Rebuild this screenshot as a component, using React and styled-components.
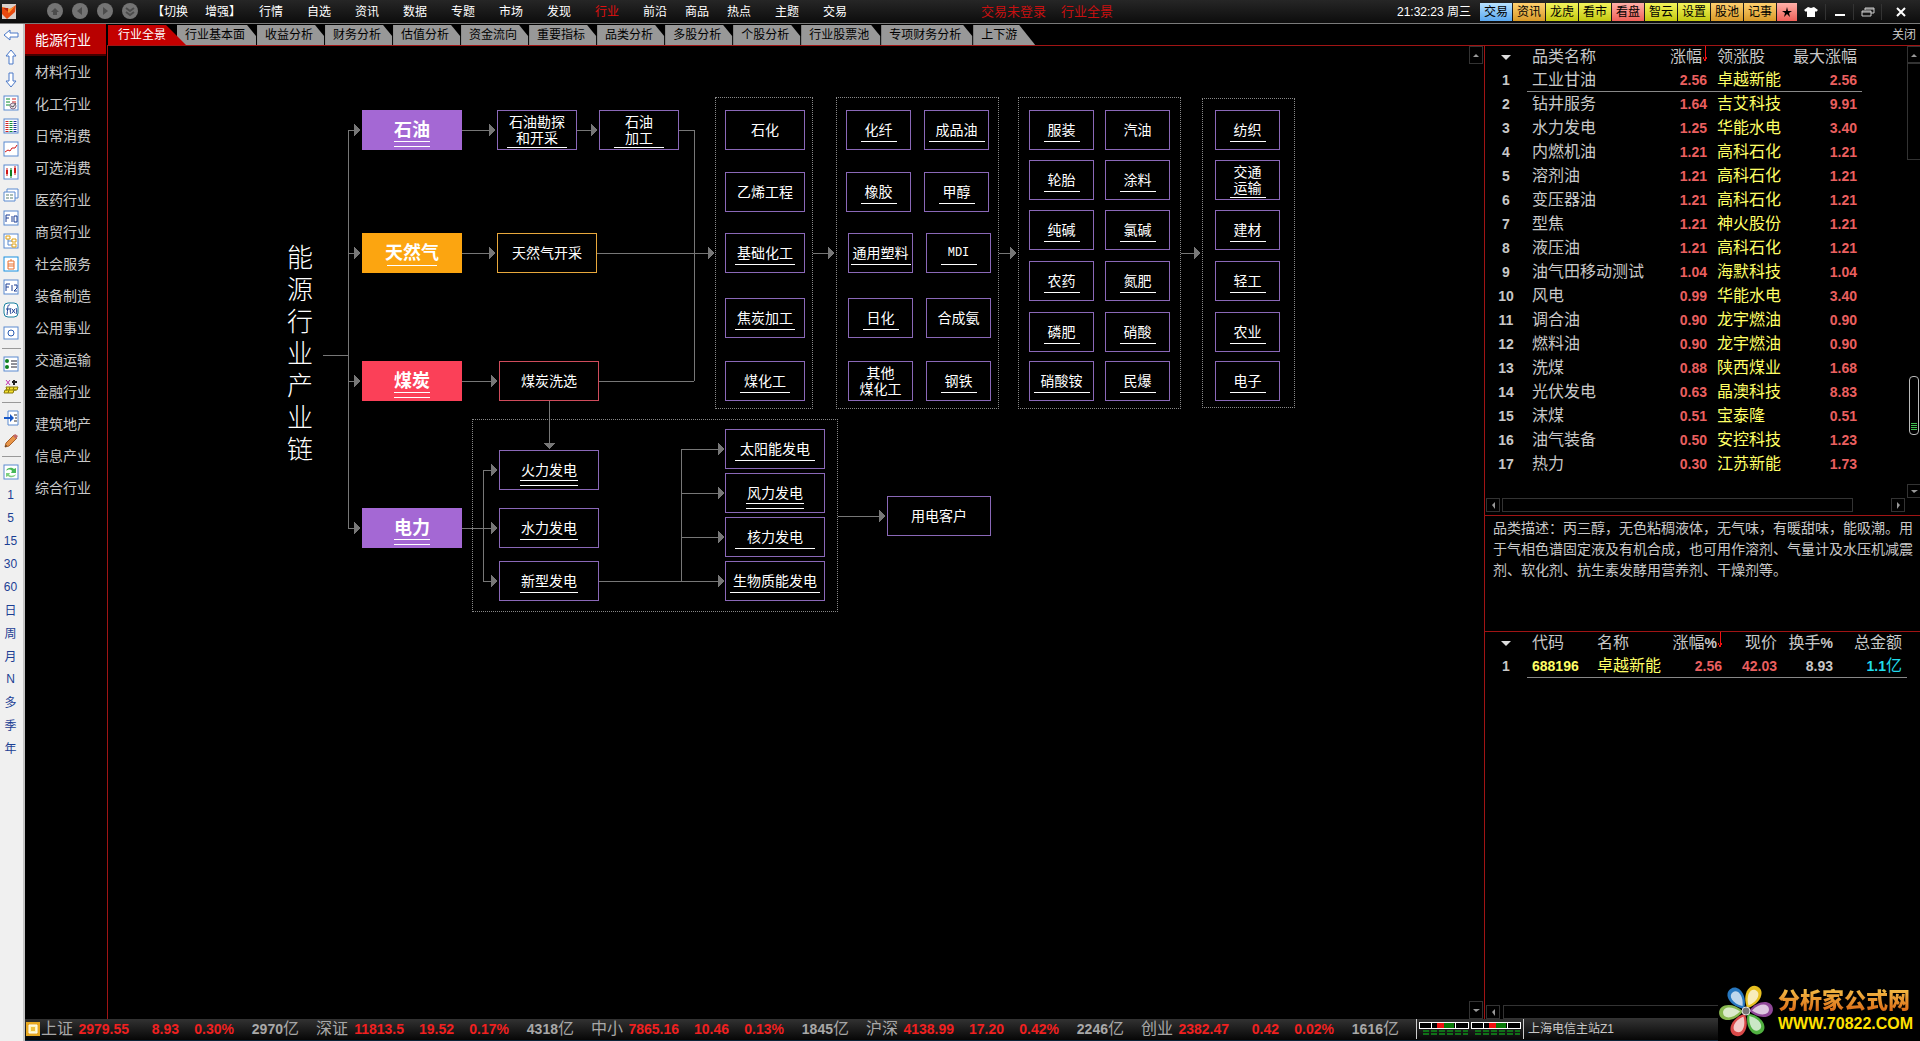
import React, { useState } from 'react';
import styled, { createGlobalStyle, css } from 'styled-components';

const RED_LINE = '#a01414';
const UP = '#ea5f5f';
const TEXT = '#c8c8c8';

const GlobalStyle = createGlobalStyle`
  * { box-sizing: border-box; }
  body {
    margin: 0;
    background: #000;
    color: ${TEXT};
    font-family: "Liberation Sans", "Noto Sans CJK SC", sans-serif;
    font-weight: 400;
    overflow: hidden;
  }
  button {
    margin: 0;
    padding: 0;
    border: 0;
    background: none;
    color: inherit;
    font: inherit;
    cursor: pointer;
  }
  svg { display: block; }
`;

const Page = styled.div`
  display: flex;
  flex-direction: column;
  height: 100vh;
`;

/* ---------- top bar ---------- */

const TopBar = styled.header`
  display: flex;
  align-items: center;
  height: 24px;
  flex: none;
  background: linear-gradient(#262626, #0c0c0c);
  border-bottom: 1px solid #7a7a7a;
  color: #fff;
  font-size: 12px;
  line-height: 16px;
`;

const Brand = styled.div`
  width: 47px;
  padding-left: 2px;
`;

const RoundButtons = styled.div`
  display: flex;
  gap: 8px;
  width: 105px;
`;

const Menu = styled.nav`
  display: flex;
`;

const MenuItem = styled.button`
  width: ${p => p.$w || 48}px;
  text-align: left;
  white-space: nowrap;
  color: ${p => (p.$active ? '#e01010' : '#fff')};
`;

const Notices = styled.div`
  display: flex;
  flex: 1;
  gap: 15px;
  padding-left: 110px;
  color: #c81010;
  font-size: 13px;
`;

const Clock = styled.time`
  width: 83px;
  white-space: nowrap;
`;

const Shortcuts = styled.div`
  display: flex;
  gap: 1px;
`;

const shades = {
  blue: 'linear-gradient(#b8e2ff, #5aa8f0)',
  orange: 'linear-gradient(#ffd070, #d89a28)',
  yellow: 'linear-gradient(#f4f45c, #c4c810)',
  red: 'linear-gradient(#ffb0a8, #f06058)',
};

const Shortcut = styled.button`
  width: ${p => p.$w || 32}px;
  height: 18px;
  background: ${p => shades[p.$shade]};
  color: #000;
  line-height: 16px;
  text-align: center;
`;

const WindowButtons = styled.div`
  display: flex;
`;

const WindowButton = styled.button`
  display: flex;
  align-items: center;
  justify-content: center;
  width: ${p => p.$w || 28}px;
  height: 16px;
  & + & { border-left: 1px solid #333; }
`;

/* ---------- tool strip ---------- */

const Body = styled.div`
  display: flex;
  flex: 1;
  min-height: 0;
`;

const Strip = styled.aside`
  width: 25px;
  flex: none;
  background: #f0f0f0;
  border-right: 2px solid #c4c4c4;
`;

const StripButton = styled.button`
  display: flex;
  align-items: center;
  justify-content: center;
  width: 21px;
  height: 23px;
  color: #1c3f94;
  font-size: 12px;
  &:first-child { height: 21px; }
`;

const StripRule = styled.hr`
  height: 1px;
  margin: 4px 2px 3px;
  border: 0;
  background: #999;
`;

/* ---------- work area ---------- */

const Work = styled.div`
  display: flex;
  flex-direction: column;
  flex: 1;
  min-width: 0;
`;

const WorkMain = styled.div`
  display: flex;
  flex: 1;
  min-height: 0;
`;

const Sectors = styled.nav`
  width: 82px;
  flex: none;
  padding-right: 1px;
`;

const Sector = styled.button`
  display: block;
  width: 100%;
  height: 32px;
  padding: 0 0 2px 10px;
  text-align: left;
  font-size: 14px;
  color: ${p => (p.$active ? '#fff' : TEXT)};
  background: ${p => (p.$active ? 'linear-gradient(#b80000 94%, #400 94%)' : 'none')};
`;

const Center = styled.div`
  display: flex;
  flex-direction: column;
  flex: 1;
  min-width: 0;
`;

const TabRow = styled.div`
  display: flex;
  align-items: flex-end;
  height: 22px;
  flex: none;
  padding-left: 1px;
  border-bottom: 1px solid ${RED_LINE};
`;

const Tab = styled.button`
  height: 20px;
  padding: 0 12px 0 8px;
  background: #989898;
  color: #000;
  font-size: 12px;
  line-height: 20px;
  white-space: nowrap;
  clip-path: polygon(0 0, calc(100% - 10px) 0, calc(100% - 1px) 11px, calc(100% - 1px) 100%, 0 100%);
  ${p => p.$last && css`
    padding-right: 18px;
    clip-path: polygon(0 0, calc(100% - 16px) 0, 100% 100%, 0 100%);
  `}
  ${p => p.$active && css`
    padding: 0 20px 0 10px;
    margin-right: -9px;
    background: #c40000;
    color: #fff;
    z-index: 1;
    clip-path: polygon(0 0, calc(100% - 20px) 0, 100% 100%, 0 100%);
  `}
`;

const CloseLink = styled.button`
  margin-left: auto;
  padding-right: 4px;
  font-size: 12px;
  line-height: 20px;
`;

const Columns = styled.div`
  display: flex;
  flex: 1;
  min-height: 0;
`;

const Canvas = styled.main`
  position: relative;
  flex: 1;
  min-width: 0;
  overflow: hidden;
  border-left: 1px solid ${RED_LINE};
`;

const Wires = styled.svg`
  position: absolute;
  left: 0;
  top: 0;
  stroke: #777;
  fill: none;
  shape-rendering: crispEdges;
`;

const Cluster = styled.div`
  position: absolute;
  left: ${p => p.$x}px;
  top: ${p => p.$y}px;
  width: ${p => p.$w}px;
  height: ${p => p.$h}px;
  border: 1px dotted #888;
`;

const tones = {
  violet: '#8a68b8',
  amber: '#e8a83c',
  rose: '#d04c5c',
};

const fills = {
  violet: '#a468d4',
  amber: '#fca510',
  rose: '#fb4058',
};

const Node = styled.button`
  position: absolute;
  left: ${p => p.$x}px;
  top: ${p => p.$y}px;
  width: ${p => p.$w}px;
  height: 40px;
  border: 1px solid ${p => tones[p.$tone]};
  color: #fff;
  font-size: 14px;
  line-height: 16px;
  white-space: pre;
  text-align: center;
  ${p => p.$latin && css`
    font-family: "Liberation Mono", monospace;
    font-size: 12px;
  `}
  ${p => p.$solid && css`
    border: 0;
    background: ${fills[p.$tone]};
    font-size: 18px;
    font-weight: 700;
    line-height: 20px;
  `}
  ${p => p.$bar && css`
    &::after {
      content: "";
      position: absolute;
      left: 50%;
      bottom: ${p.$double ? 3 : p.$low ? 0 : 6}px;
      width: ${p.$bar}px;
      height: ${p.$double ? 4 : 1}px;
      margin-left: -${p.$bar / 2}px;
      border-top: 1px solid #fff;
      border-bottom: ${p.$double ? '1px solid #fff' : '0'};
    }
  `}
`;

const ChainTitle = styled.h1`
  position: absolute;
  left: 178px;
  top: 196px;
  width: 28px;
  margin: 0;
  color: #fff;
  font-size: 26px;
  font-weight: 300;
  line-height: 32px;
  text-align: center;
  word-break: break-all;
`;

/* ---------- scroll bars ---------- */

const ScrollColumn = styled.div`
  display: flex;
  flex-direction: column;
  justify-content: space-between;
  flex: none;
  width: ${p => p.$w}px;
`;

const ScrollButton = styled.button`
  display: flex;
  align-items: center;
  justify-content: center;
  flex: none;
  width: 14px;
  height: ${p => p.$h || 14}px;
  border: 1px solid #333;
  color: #999;
`;

const ScrollThumb = styled.div`
  height: 97px;
  margin-bottom: auto;
  border: 1px solid #333;
  border-right: 0;
`;

const ScrollRow = styled.div`
  display: flex;
  gap: 2px;
  padding: 0 15px 3px 1px;
`;

const ScrollTrack = styled.div`
  flex: 1;
  height: 14px;
  margin-right: ${p => p.$gap || 0}px;
  border: 1px solid #333;
`;

/* ---------- quote panel ---------- */

const Panel = styled.aside`
  display: flex;
  flex-direction: column;
  flex: none;
  width: 436px;
  border-left: 1px solid ${RED_LINE};
`;

const ListPane = styled.section`
  position: relative;
  display: flex;
  flex-direction: column;
  height: 470px;
  border-bottom: 1px solid ${RED_LINE};
`;

const ListBody = styled.div`
  display: flex;
  flex: 1;
  justify-content: space-between;
`;

const Gauge = styled.div`
  position: absolute;
  right: 1px;
  top: 330px;
  display: flex;
  align-items: flex-end;
  justify-content: center;
  width: 10px;
  height: 59px;
  padding-bottom: 2px;
  border: 1px solid #bbb;
  border-radius: 4px;
  background: #000;
`;

const Quotes = styled.table`
  table-layout: fixed;
  border-collapse: separate;
  border-spacing: 0;
  align-self: flex-start;
  width: ${p => p.$w}px;
  font-size: 16px;
`;

const Cell = styled.td`
  height: 24px;
  padding: 0 5px;
  border-bottom: 1px solid ${p => (p.$marked ? '#888' : 'transparent')};
  color: ${p => p.$color || TEXT};
  font-size: ${p => (p.$num ? 14 : 16)}px;
  font-weight: ${p => (p.$num ? 700 : 400)};
  line-height: 22px;
  text-align: ${p => p.$align || 'left'};
  white-space: nowrap;
`;

const HeadCell = styled.th`
  height: 22px;
  padding: 0 5px;
  font-weight: 400;
  line-height: 22px;
  text-align: ${p => p.$align || 'left'};
  white-space: nowrap;
  svg { display: inline-block; }
  b { font-size: 14px; }
`;

const HeadSort = styled(HeadCell)`
  padding-right: 4px;
`;

const Unit = styled.span`
  font-size: 16px;
  font-weight: 400;
`;

const About = styled.p`
  height: 116px;
  margin: 0;
  padding: 2px 6px 0 8px;
  border-bottom: 1px solid ${RED_LINE};
  font-size: 14px;
  line-height: 21px;
  word-break: break-all;
`;

const StockPane = styled.section`
  display: flex;
  flex-direction: column;
  flex: 1;
  justify-content: space-between;
`;

const StockScroll = styled.div`
  display: flex;
  gap: 3px;
  padding-left: 1px;
`;

/* ---------- status bar ---------- */

const StatusBar = styled.footer`
  display: flex;
  align-items: center;
  height: 22px;
  flex: none;
  padding-bottom: 1px;
  background: linear-gradient(#323232, #060606);
  border-bottom: 1px solid #0c2438;
  font-size: 16px;
  line-height: 20px;
`;

const StatusIcon = styled.div`
  width: 16px;
  padding-left: 1px;
`;

const IndexQuote = styled.div`
  display: grid;
  grid-template-columns: 34px 54px 50px 55px 65px;
  width: 275px;
  flex: none;
  white-space: nowrap;
  color: #a8a8a8;
`;

const IndexValue = styled.span`
  color: ${p => (p.$plain ? '#a8a8a8' : '#f02020')};
  font-size: 14px;
  font-weight: 700;
  text-align: right;
`;

const Meter = styled.div`
  display: flex;
  width: 108px;
  height: 20px;
  padding: 2px 1px 0;
  border-left: 1px solid #ccc;
  border-right: 1px solid #ccc;
`;

const Server = styled.span`
  padding-left: 4px;
  font-size: 12px;
`;

const Watermark = styled.a`
  position: fixed;
  right: 0;
  bottom: 0;
  display: flex;
  align-items: center;
  width: 202px;
  height: 60px;
  background: #000;
  text-decoration: none;
  font-weight: 700;
`;

const WatermarkText = styled.span`
  padding-left: 4px;
  color: #ffe000;
  font-size: 16px;
  line-height: 20px;
  strong {
    display: block;
    background: linear-gradient(#f4c048, #d86010);
    background-clip: text;
    color: transparent;
    font-size: 22px;
    line-height: 26px;
  }
`;

/* ---------- data ---------- */

const menu = [
  ['【切换', 53], ['增强】', 54], ['行情'], ['自选'], ['资讯'], ['数据'], ['专题'], ['市场'],
  ['发现'], ['行业'], ['前沿', 42], ['商品', 42], ['热点'], ['主题'], ['交易'],
];

const shortcuts = [
  ['交易', 'blue'], ['资讯', 'orange'], ['龙虎', 'yellow'], ['看市', 'yellow'], ['看盘', 'red'],
  ['智云', 'yellow'], ['设置', 'yellow'], ['股池', 'orange'], ['记事', 'orange'],
];

const tabs = [
  '行业全景', '行业基本面', '收益分析', '财务分析', '估值分析', '资金流向', '重要指标',
  '品类分析', '多股分析', '个股分析', '行业股票池', '专项财务分析', '上下游',
];

const sectors = [
  '能源行业', '材料行业', '化工行业', '日常消费', '可选消费', '医药行业', '商贸行业', '社会服务',
  '装备制造', '公用事业', '交通运输', '金融行业', '建筑地产', '信息产业', '综合行业',
];

const periods = ['1', '5', '15', '30', '60', '日', '周', '月', 'N', '多', '季', '年'];

const clusters = [
  [607, 51, 98, 312], [728, 51, 163, 312], [910, 51, 163, 312], [1094, 52, 93, 310], [364, 373, 366, 193],
];

// label, x, y, width, underline width, options
const nodes = [
  ['石油', 254, 64, 100, 36, { solid: true, double: true }],
  ['天然气', 254, 187, 100, 50, { solid: true, tone: 'amber' }],
  ['煤炭', 254, 315, 100, 36, { solid: true, double: true, tone: 'rose' }],
  ['电力', 254, 462, 100, 36, { solid: true, double: true }],
  ['石油勘探\n和开采', 389, 64, 80, 60, { low: true }],
  ['石油\n加工', 491, 64, 80, 50, { low: true }],
  ['天然气开采', 389, 187, 100, 0, { tone: 'amber' }],
  ['煤炭洗选', 391, 315, 100, 0, { tone: 'rose' }],
  ['石化', 617, 64, 80, 0],
  ['乙烯工程', 617, 126, 80, 0],
  ['基础化工', 617, 187, 80, 60],
  ['焦炭加工', 617, 252, 80, 60],
  ['煤化工', 617, 315, 80, 50],
  ['化纤', 738, 64, 65, 36],
  ['成品油', 816, 64, 65, 56],
  ['橡胶', 738, 126, 65, 36],
  ['甲醇', 816, 126, 65, 36],
  ['通用塑料', 740, 187, 65, 60],
  ['MDI', 818, 187, 65, 36, { latin: true }],
  ['日化', 740, 252, 65, 36],
  ['合成氨', 818, 252, 65, 0],
  ['其他\n煤化工', 740, 315, 65, 0],
  ['钢铁', 818, 315, 65, 36],
  ['服装', 921, 64, 65, 36],
  ['汽油', 997, 64, 65, 0],
  ['轮胎', 921, 114, 65, 36],
  ['涂料', 997, 114, 65, 36],
  ['纯碱', 921, 164, 65, 36],
  ['氯碱', 997, 164, 65, 36],
  ['农药', 921, 215, 65, 36],
  ['氮肥', 997, 215, 65, 36],
  ['磷肥', 921, 266, 65, 36],
  ['硝酸', 997, 266, 65, 36],
  ['硝酸铵', 921, 315, 65, 56],
  ['民爆', 997, 315, 65, 36],
  ['纺织', 1107, 64, 65, 36],
  ['交通\n运输', 1107, 114, 65, 36, { low: true }],
  ['建材', 1107, 164, 65, 36],
  ['轻工', 1107, 215, 65, 36],
  ['农业', 1107, 266, 65, 36],
  ['电子', 1107, 315, 65, 36],
  ['火力发电', 391, 404, 100, 58, { double: true }],
  ['水力发电', 391, 462, 100, 58],
  ['新型发电', 391, 515, 100, 58],
  ['太阳能发电', 617, 383, 100, 80],
  ['风力发电', 617, 427, 100, 58, { double: true }],
  ['核力发电', 617, 471, 100, 80],
  ['生物质能发电', 617, 515, 100, 90],
  ['用电客户', 779, 450, 104, 0],
];

const wires = [
  'M215 309H240', 'M240 84V482', 'M571 84H586V335', 'M491 335H586', 'M375 424V535', 'M573 403V535',
];

const arrows = [
  [240, 252, 84], [240, 252, 207], [240, 252, 335], [240, 252, 482],
  [354, 387, 84], [469, 489, 84], [354, 387, 207], [489, 606, 207], [354, 389, 335],
  [705, 726, 207], [891, 908, 207], [1073, 1092, 207],
  [375, 389, 424], [354, 389, 482], [375, 389, 535],
  [573, 616, 403], [573, 616, 447], [573, 616, 491], [491, 616, 535], [730, 777, 470],
];

const products = [
  ['工业甘油', '2.56', '卓越新能', '2.56'],
  ['钻井服务', '1.64', '吉艾科技', '9.91'],
  ['水力发电', '1.25', '华能水电', '3.40'],
  ['内燃机油', '1.21', '高科石化', '1.21'],
  ['溶剂油', '1.21', '高科石化', '1.21'],
  ['变压器油', '1.21', '高科石化', '1.21'],
  ['型焦', '1.21', '神火股份', '1.21'],
  ['液压油', '1.21', '高科石化', '1.21'],
  ['油气田移动测试', '1.04', '海默科技', '1.04'],
  ['风电', '0.99', '华能水电', '3.40'],
  ['调合油', '0.90', '龙宇燃油', '0.90'],
  ['燃料油', '0.90', '龙宇燃油', '0.90'],
  ['洗煤', '0.88', '陕西煤业', '1.68'],
  ['光伏发电', '0.63', '晶澳科技', '8.83'],
  ['沫煤', '0.51', '宝泰隆', '0.51'],
  ['油气装备', '0.50', '安控科技', '1.23'],
  ['热力', '0.30', '江苏新能', '1.73'],
];

const indexes = [
  ['上证', '2979.55', '8.93', '0.30%', '2970'],
  ['深证', '11813.5', '19.52', '0.17%', '4318'],
  ['中小', '7865.16', '10.46', '0.13%', '1845'],
  ['沪深', '4138.99', '17.20', '0.42%', '2246'],
  ['创业', '2382.47', '0.42', '0.02%', '1616'],
];

/* ---------- icons ---------- */

const Frame = () => <rect x="1" y="1" width="14" height="14" fill="#fff" stroke="#5a8ad0" />;

const tools = {
  back: <path d="M1 8 7 3v3h8v4H7v3z" fill="#fff" stroke="#4a78c8" />,
  up: <path d="M8 1 13 7h-3v8H6V7H3z" fill="#fff" stroke="#4a78c8" />,
  down: <path d="M8 15 3 9h3V1h4v8h3z" fill="#fff" stroke="#4a78c8" />,
  news: <><Frame /><path d="M3 4h4M3 7h4M3 10h4" stroke="#0a8a2a" /><path d="M9 4h4M9 7h4" stroke="#d02020" /><circle cx="10" cy="11" r="3" fill="#e8e0e8" stroke="#887088" /><path d="m8 11 2 1 3-4" stroke="#555" fill="none" /></>,
  grid: <><Frame /><path d="M4 3v11" stroke="#d02020" strokeWidth="3" strokeDasharray="1 1" /><path d="M8 3v11" stroke="#109030" strokeWidth="3" strokeDasharray="1 1" /><path d="M12 3v11" stroke="#2030a0" strokeWidth="3" strokeDasharray="1 1" /></>,
  line: <><Frame /><path d="m2 11 3-2 2 1 2-3h3l2-3" stroke="#d01818" fill="none" /></>,
  candle: <><Frame /><path d="M4 4v8M12 2v9" stroke="#d01818" /><path d="M8 4v10" stroke="#108020" /><path d="M3 6h2v4H3zM11 4h2v5h-2z" fill="#d01818" /><path d="M7 6h2v6H7z" fill="#108020" /></>,
  windows: <><path d="M4 2h11v9H4z" fill="#fff" stroke="#5a8ad0" /><path d="M1 5h11v9H1z" fill="#fff" stroke="#5a8ad0" /><path d="M3 8h3m1 0h3M3 11h3m1 0h3" stroke="#5a8070" /></>,
  f10: <><Frame /><path d="M3 12V5h4M3 8h3M9 6v6M11 6h3v6h-3z" stroke="#1c3f94" fill="none" /></>,
  tree: <><Frame /><path d="M5 6v6h5M5 8h5" stroke="#5a8ad0" fill="none" /><path d="M3 3h4v3H3zM9 6h4v3H9zM9 11h4v3H9z" fill="#fff" stroke="#e0a010" /></>,
  own: <><rect x="1" y="1" width="14" height="14" fill="#fff" stroke="#1890e0" /><path d="M5 5h6v8H5zM5 8h6M5 10h6M8 3v2" stroke="#e87030" fill="none" /></>,
  f12: <><Frame /><path d="M3 12V5h4M3 8h3M9 6v6M11 6h3v3l-3 3h3" stroke="#1c3f94" fill="none" /></>,
  fx: <><rect x="1" y="1" width="14" height="14" rx="4" fill="#fff" stroke="#1880a0" /><path d="M7 3c-3-1-2 4-3 10M3 7h4M8 6c-1 2-1 4 0 6M9 7l3 4M12 7l-3 4M13 6c1 2 1 4 0 6" stroke="#1c3f94" fill="none" /></>,
  circle: <><rect x="1" y="2" width="14" height="12" fill="#fff" stroke="#5a8ad0" /><circle cx="8" cy="8" r="3" fill="none" stroke="#285ab0" /></>,
  list: <><Frame /><circle cx="4" cy="5" r="2" fill="#108020" /><circle cx="4" cy="11" r="2" fill="#108020" /><path d="M8 5h6M8 8h6M8 11h6" stroke="#223" /></>,
  gold: <><path d="m3 1 4 5M7 1 3 6" stroke="#c030b0" /><path d="M11 1v5M9 3h5" stroke="#222" strokeWidth="2" /><path d="M3 8h12l-1 3h-3l-1 3H1l1-3h2zM7 8l-2 6M11 8l-1 3M3 11h10" fill="#f4e030" stroke="#887808" /></>,
  jump: <><path d="M5 1h10v14H5z" fill="#fff" stroke="#5a8ad0" /><path d="M1 7h6V4l4 4-4 4V9H1z" fill="#1858c8" /><path d="M11 5h3M12 8h2M11 11h3" stroke="#333" /></>,
  pencil: <><path d="m2 14 1-4 8-8 3 3-8 8z" fill="#e8964a" stroke="#a86028" /><path d="m2 14 1-2 1 1z" fill="#222" /><path d="m10 3 2-2 3 2-2 3z" fill="#c06868" /></>,
  sync: <><Frame /><path d="M3 7c1-4 6-4 8-2l2-1v5H8l1-2c-1-2-4-2-6 0z" fill="#48b858" /><path d="M13 10c-1 4-6 4-8 2l-2 1V9h4l-1 2c2 1 5 1 7-1z" fill="#80d080" /></>,
};

const toolGroups = [
  ['back', 'up', 'down', 'news', 'grid', 'line', 'candle', 'windows', 'f10', 'tree', 'own', 'f12', 'fx', 'circle'],
  ['list', 'gold'],
  ['jump', 'pencil'],
  ['sync'],
];

const roundGlyphs = [
  'M4 9 8 5l4 4H10v3H6V9z', 'M10 4v8L5 8z', 'M6 4v8l5-4z', 'm4 5 4 3 4-3M4 9l4 3 4-3',
];

const carets = {
  up: 'M1 6 4 3l3 3z',
  down: 'M1 3h7L4 6z',
  left: 'M6 1v7L3 4z',
  right: 'M3 1v7l3-4z',
};

const Caret = ({ dir }) => (
  <svg width="8" height="8"><path d={carets[dir]} fill="currentColor" /></svg>
);

const SortMark = () => (
  <svg width="6" height="16"><path d="M3 0v15M1 11l2 4 2-4" stroke="#f01010" fill="none" shapeRendering="crispEdges" /></svg>
);

const HeadCaret = () => (
  <svg width="10" height="8"><path d="M0 1h10L5 6z" fill="#ddd" /></svg>
);

const BrandMark = () => (
  <svg width="16" height="16">
    <rect width="14" height="15" fill="#d8d0cc" />
    <path d="M0 3 8 5l6-4-1 7-8 7-5-5z" fill="#e84a10" />
    <path d="M0 3 8 5l5-3-6 7z" fill="#ff9a30" />
    <path d="M1 4h5v4z" fill="#b82008" />
  </svg>
);

const petals = ['#e8c020', '#904898', '#50b040', '#d84848', '#88b850', '#2878c0'];

const Flower = () => (
  <svg width="56" height="56" viewBox="-28 -28 56 56">
    {petals.map((color, i) => (
      <g key={color} transform={`rotate(${25 + i * 60})`}>
        <path d="M0-3C-11-13-9-27 0-27S11-13 0-3z" fill={color} />
        <path d="M0-6C-7-14-6-23 0-23S7-14 0-6z" fill="#fff" opacity="0.7" />
      </g>
    ))}
    <circle r="4" fill="#777" stroke="#ddd" />
  </svg>
);

const MeterMark = () => (
  <svg width="52" height="16" shapeRendering="crispEdges">
    <rect x="1" y="1" width="49" height="6" fill="#000" stroke="#fff" />
    <path d="M13 1v6M19 1v6M37 1v6" stroke="#fff" />
    <path d="M19 2h7v5h-7z" fill="#f01010" />
    <path d="M26 2h10v5H26z" fill="#087808" />
    <path d="M5 10h45M5 13h45" stroke="#107018" strokeWidth="2" strokeDasharray="6 2" />
  </svg>
);

/* ---------- pieces ---------- */

const ToolStrip = () => (
  <Strip>
    {toolGroups.map((group, i) => (
      <React.Fragment key={i}>
        {i > 0 && <StripRule />}
        {group.map(name => (
          <StripButton key={name} aria-label={name}>
            <svg width="16" height="16">{tools[name]}</svg>
          </StripButton>
        ))}
      </React.Fragment>
    ))}
    {periods.map(p => <StripButton key={p}>{p}</StripButton>)}
  </Strip>
);

const Chain = () => (
  <Canvas>
    <Wires width="1200" height="600">
      {wires.map(d => <path key={d} d={d} />)}
      {arrows.map(([from, to, y]) => (
        <g key={`${to}-${y}`}>
          <path d={`M${from} ${y}H${to}`} />
          <path d={`M${to - 6} ${y - 6}L${to} ${y}L${to - 6} ${y + 6}z`} fill="#777" stroke="none" />
        </g>
      ))}
      <path d="M441 355V403" />
      <path d="M435 397h12l-6 6z" fill="#777" stroke="none" />
    </Wires>
    {clusters.map(([x, y, w, h]) => <Cluster key={x} $x={x} $y={y} $w={w} $h={h} />)}
    <ChainTitle>能源行业产业链</ChainTitle>
    {nodes.map(([label, x, y, w, bar, opt = {}]) => (
      <Node
        key={label}
        $x={x}
        $y={y}
        $w={w}
        $bar={bar}
        $tone={opt.tone || 'violet'}
        $solid={opt.solid}
        $double={opt.double}
        $low={opt.low}
        $latin={opt.latin}
      >
        {label}
      </Node>
    ))}
  </Canvas>
);

const ProductTable = () => (
  <Quotes $w={377}>
    <colgroup>
      <col width="42" /><col width="125" /><col width="60" /><col width="70" /><col width="80" />
    </colgroup>
    <thead>
      <tr>
        <HeadCell $align="center"><HeadCaret /></HeadCell>
        <HeadCell>品类名称</HeadCell>
        <HeadSort $align="right">涨幅<SortMark /></HeadSort>
        <HeadCell>领涨股</HeadCell>
        <HeadCell $align="right">最大涨幅</HeadCell>
      </tr>
    </thead>
    <tbody>
      {products.map(([name, pct, leader, max], i) => (
        <tr key={name}>
          <Cell $num $align="center">{i + 1}</Cell>
          <Cell $marked={i === 0}>{name}</Cell>
          <Cell $marked={i === 0} $num $align="right" $color={UP}>{pct}</Cell>
          <Cell $marked={i === 0} $color="#ffff66">{leader}</Cell>
          <Cell $marked={i === 0} $num $align="right" $color={UP}>{max}</Cell>
        </tr>
      ))}
    </tbody>
  </Quotes>
);

const StockTable = () => (
  <Quotes $w={422}>
    <colgroup>
      <col width="42" /><col width="65" /><col width="70" /><col width="65" />
      <col width="55" /><col width="56" /><col width="69" />
    </colgroup>
    <thead>
      <tr>
        <HeadCell $align="center"><HeadCaret /></HeadCell>
        <HeadCell>代码</HeadCell>
        <HeadCell>名称</HeadCell>
        <HeadSort $align="right">涨幅<b>%</b><SortMark /></HeadSort>
        <HeadCell $align="right">现价</HeadCell>
        <HeadCell $align="right">换手<b>%</b></HeadCell>
        <HeadCell $align="right">总金额</HeadCell>
      </tr>
    </thead>
    <tbody>
      <tr>
        <Cell $num $align="center">1</Cell>
        <Cell $marked $num $color="#ffff66">688196</Cell>
        <Cell $marked $color="#ffff66">卓越新能</Cell>
        <Cell $marked $num $align="right" $color={UP}>2.56</Cell>
        <Cell $marked $num $align="right" $color={UP}>42.03</Cell>
        <Cell $marked $num $align="right">8.93</Cell>
        <Cell $marked $num $align="right" $color="#20dcec">1.1<Unit>亿</Unit></Cell>
      </tr>
    </tbody>
  </Quotes>
);

const App = () => {
  const [tab, setTab] = useState(tabs[0]);
  const [sector, setSector] = useState(sectors[0]);

  return (
    <Page>
      <GlobalStyle />
      {/* top bar */}
      <TopBar>
        <Brand><BrandMark /></Brand>
        <RoundButtons>
          {roundGlyphs.map((d, i) => (
            <button key={d} aria-label={['home', 'back', 'forward', 'more'][i]}>
              <svg width="17" height="17">
                <circle cx="8" cy="8" r="8" fill="#747474" />
                <path d={d} fill={i === 3 ? 'none' : '#4c4c4c'} stroke={i === 3 ? '#4c4c4c' : 'none'} strokeWidth="2" />
              </svg>
            </button>
          ))}
        </RoundButtons>
        <Menu>
          {menu.map(([label, w]) => (
            <MenuItem key={label} $w={w} $active={label === '行业'}>{label}</MenuItem>
          ))}
        </Menu>
        <Notices><span>交易未登录</span><span>行业全景</span></Notices>
        <Clock>21:32:23 周三</Clock>
        <Shortcuts>
          {shortcuts.map(([label, shade]) => <Shortcut key={label} $shade={shade}>{label}</Shortcut>)}
          <Shortcut $shade="red" $w={20} aria-label="收藏">
            <svg width="20" height="18"><path d="m10 4 1 4h4l-3 2 1 4-3-3-3 3 1-4-3-2h4z" /></svg>
          </Shortcut>
        </Shortcuts>
        <WindowButtons>
          <WindowButton aria-label="skin">
            <svg width="14" height="12"><path d="m4 1 3 1 3-1 4 3-2 2-1-1v6H3V5L2 6 0 4z" fill="#fff" /></svg>
          </WindowButton>
          <WindowButton aria-label="minimize">
            <svg width="12" height="12"><path d="M1 8h10v2H1z" fill="#fff" /></svg>
          </WindowButton>
          <WindowButton aria-label="restore">
            <svg width="14" height="12" fill="none" stroke="#ccc"><path d="M4 4V2h9v5h-3M1 5h9v5H1z" /><path d="M1 6h9M4 3h9" /></svg>
          </WindowButton>
          <WindowButton $w={39} aria-label="close">
            <svg width="12" height="12"><path d="m2 2 8 8M10 2l-8 8" stroke="#fff" strokeWidth="2" /></svg>
          </WindowButton>
        </WindowButtons>
      </TopBar>
      {/* top bar end */}
      <Body>
        <ToolStrip />
        <Work>
          <WorkMain>
            <Sectors>
              {sectors.map(name => (
                <Sector key={name} $active={name === sector} onClick={() => setSector(name)}>{name}</Sector>
              ))}
            </Sectors>
            <Center>
              <TabRow>
                {tabs.map((name, i) => (
                  <Tab
                    key={name}
                    $active={name === tab}
                    $last={i === tabs.length - 1}
                    onClick={() => setTab(name)}
                  >
                    {name}
                  </Tab>
                ))}
                <CloseLink>关闭</CloseLink>
              </TabRow>
              <Columns>
                <Chain />
                <ScrollColumn $w={15}>
                  <ScrollButton $h={18} aria-label="up"><Caret dir="up" /></ScrollButton>
                  <ScrollButton $h={18} aria-label="down"><Caret dir="down" /></ScrollButton>
                </ScrollColumn>
                {/* quote panel */}
                <Panel>
                  <ListPane>
                    <ListBody>
                      <ProductTable />
                      <ScrollColumn $w={13}>
                        <ScrollButton $h={17} aria-label="up"><Caret dir="up" /></ScrollButton>
                        <ScrollThumb />
                        <ScrollButton aria-label="down"><Caret dir="down" /></ScrollButton>
                      </ScrollColumn>
                    </ListBody>
                    <ScrollRow>
                      <ScrollButton aria-label="left"><Caret dir="left" /></ScrollButton>
                      <ScrollTrack $gap={36} />
                      <ScrollButton aria-label="right"><Caret dir="right" /></ScrollButton>
                    </ScrollRow>
                    <Gauge>
                      <svg width="6" height="10"><path d="M0 1h6M0 3h6M0 5h6M0 7h6" stroke="#40c050" shapeRendering="crispEdges" /></svg>
                    </Gauge>
                  </ListPane>
                  <About>
                    品类描述：丙三醇，无色粘稠液体，无气味，有暖甜味，能吸潮。用于气相色谱固定液及有机合成，也可用作溶剂、气量计及水压机减震剂、软化剂、抗生素发酵用营养剂、干燥剂等。
                  </About>
                  <StockPane>
                    <StockTable />
                    <StockScroll>
                      <ScrollButton aria-label="left"><Caret dir="left" /></ScrollButton>
                      <ScrollTrack />
                    </StockScroll>
                  </StockPane>
                </Panel>
                {/* quote panel end */}
              </Columns>
            </Center>
          </WorkMain>
          <StatusBar>
            <StatusIcon>
              <svg width="14" height="14"><path d="M0 0h14v14H0z" fill="#e8a820" /><path d="M3 3h8v8H3z" fill="#fff4b8" stroke="#fff" /><path d="M5 5h4v4H5z" fill="#f0c040" /></svg>
            </StatusIcon>
            {indexes.map(([name, value, change, pct, volume]) => (
              <IndexQuote key={name}>
                <span>{name}</span>
                <IndexValue>{value}</IndexValue>
                <IndexValue>{change}</IndexValue>
                <IndexValue>{pct}</IndexValue>
                <IndexValue $plain>{volume}<Unit>亿</Unit></IndexValue>
              </IndexQuote>
            ))}
            <Meter><MeterMark /><MeterMark /></Meter>
            <Server>上海电信主站Z1</Server>
          </StatusBar>
        </Work>
      </Body>
      <Watermark href="#home">
        <Flower />
        <WatermarkText>
          <strong>分析家公式网</strong>
          WWW.70822.COM
        </WatermarkText>
      </Watermark>
    </Page>
  );
};

export default App;
